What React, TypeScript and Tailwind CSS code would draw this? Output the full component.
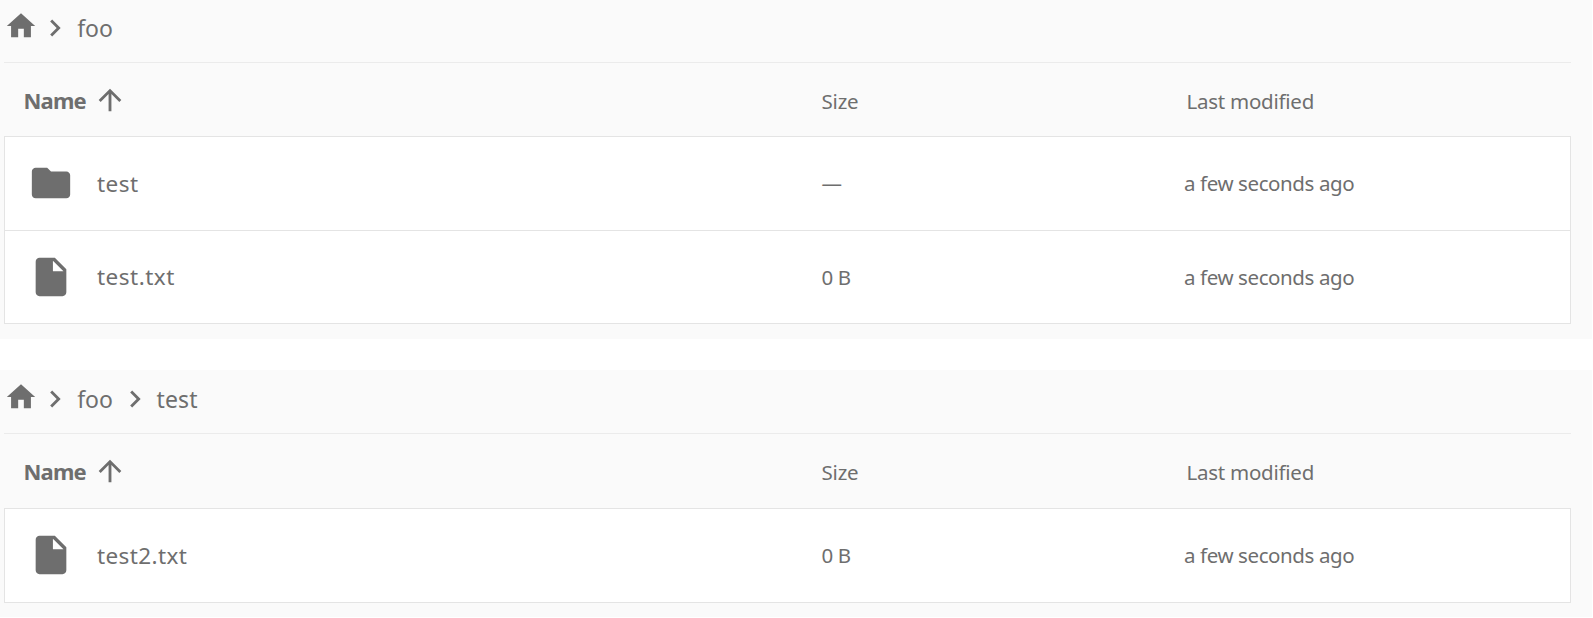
type Entry = { name: string; nameClass: string; kind: 'folder' | 'file'; size: string };

const paths = {
  home: 'M10 20v-6h4v6h5v-8h3L12 3 2 12h3v8z',
  chevron: 'M10 6L8.59 7.41 13.17 12l-4.58 4.59L10 18l6-6z',
  arrow: 'M4 12l1.41 1.41L11 7.83V20h2V7.83l5.58 5.59L20 12l-8-8-8 8z',
  folder: 'M10 4H4c-1.1 0-1.99.9-1.99 2L2 18c0 1.1.9 2 2 2h16c1.1 0 2-.9 2-2V8c0-1.1-.9-2-2-2h-8l-2-2z',
  file: 'M6 2c-1.1 0-1.99.9-1.99 2L4 20c0 1.1.89 2 1.99 2H18c1.1 0 2-.9 2-2V8l-6-6H6zm7 7V3.5L18.5 9H13z',
};

function Icon({ name, className }: { name: keyof typeof paths; className: string }) {
  return (
    <svg viewBox="0 0 24 24" fill="currentColor" className={`shrink-0 ${className}`}>
      <path d={paths[name]} />
    </svg>
  );
}

function Crumb({ label, className }: { label: string; className: string }) {
  return (
    <>
      <Icon name="chevron" className="mt-[1.5px] ml-[0.4px] size-[34px]" />
      <span className={`mt-[2px] ml-[4.8px] text-[23px] leading-[34px] ${className}`}>{label}</span>
    </>
  );
}

function Row({ entry, className }: { entry: Entry; className: string }) {
  return (
    <div className={`flex items-center pl-[23.4px] ${className}`}>
      <Icon name={entry.kind} className="mb-[1px] size-[46px]" />
      <span className="ml-[22.6px] flex w-[724.4px] text-[22.5px] leading-[34px]">
        <span className={entry.nameClass}>{entry.name}</span>
      </span>
      <span className="mb-[1px] w-[362.6px] text-[20.5px] leading-[34px] tracking-[-0.3px]">{entry.size}</span>
      <span className="mb-[1px] text-[20.5px] leading-[34px] tracking-[-0.4px]">a few seconds ago</span>
    </div>
  );
}

function Header({ className }: { className: string }) {
  return (
    <div className={`flex items-start pt-[19.5px] pl-[19.5px] ${className}`}>
      <span className="w-[65px] text-[22px] leading-[34px] font-bold tracking-[-0.8px]">Name</span>
      <Icon name="arrow" className="ml-[4.3px] size-[34px]" />
      <span className="mt-[1.5px] ml-[694.7px] w-[365px] text-[20.5px] leading-[34px] tracking-[-0.2px]">Size</span>
      <span className="mt-[1.5px] text-[20.5px] leading-[34px] tracking-[-0.25px]">Last modified</span>
    </div>
  );
}

export default function App() {
  return (
    <div className="flex h-[618px] w-[1593px] flex-col bg-white font-['Noto_Sans','Open_Sans',sans-serif] whitespace-nowrap text-[#6e6e6e]">
      <section className="h-[339px] w-[1592px] bg-[#fafafa] pr-[21px] pl-1">
        <nav className="flex h-[63px] items-start border-b border-[#ebebeb] pt-[9px]">
          <Icon name="home" className="size-[34px]" />
          <Crumb label="foo" className="w-[40px]" />
        </nav>
        <Header className="h-[73px]" />
        <div className="border border-[#e4e4e4] bg-white">
          <Row entry={{ name: 'test', nameClass: 'tracking-[0.5px]', kind: 'folder', size: '—' }} className="h-[94px] border-b border-[#e4e4e4]" />
          <Row entry={{ name: 'test.txt', nameClass: 'tracking-[0.5px]', kind: 'file', size: '0 B' }} className="h-[92px]" />
        </div>
      </section>
      <section className="mt-[31px] h-[247px] w-[1592px] bg-[#fafafa] pr-[21px] pl-1">
        <nav className="flex h-[64px] items-start border-b border-[#ebebeb] pt-[10px]">
          <Icon name="home" className="size-[34px]" />
          <Crumb label="foo" className="w-[40px]" />
          <Crumb label="test" className="tracking-[0.2px]" />
        </nav>
        <Header className="h-[74px]" />
        <div className="border border-[#e4e4e4] bg-white">
          <Row entry={{ name: 'test2.txt', nameClass: 'tracking-[0.4px]', kind: 'file', size: '0 B' }} className="h-[93px]" />
        </div>
      </section>
    </div>
  );
}
